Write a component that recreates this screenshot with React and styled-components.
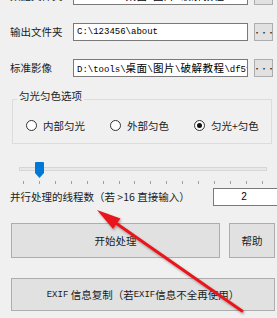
import React from "react";
import styled, { createGlobalStyle } from "styled-components";

const GlobalStyle = createGlobalStyle`
    html, body {
        margin: 0;
        padding: 0;
        background: #f0f0f0;
        overflow: hidden;
    }
`;

const UI_FONT = `"Noto Sans CJK SC", "Noto Sans", sans-serif`;
const MONO_FONT = `"Liberation Mono", "Noto Sans CJK SC", monospace`;

const paths = [
    { label: "数据文件夹", value: "D:\\tools\\桌面\\图片\\破解教程" },
    { label: "输出文件夹", value: "C:\\123456\\about" },
    { label: "标准影像", value: "D:\\tools\\桌面\\图片\\破解教程\\df5f" },
];

const modes = [
    { text: "内部匀光", checked: false },
    { text: "外部匀色", checked: false },
    { text: "匀光+匀色", checked: true },
];

const TICKS = 16;

// 한자 부분만 더 크게 (SimSun 처럼 반각/전각 폭 맞추기)
const PathText = ({ value }) =>
    value.split(/([\u4e00-\u9fff]+)/).map((part, i) =>
        i % 2 ? <Wide key={i}>{part}</Wide> : <span key={i}>{part}</span>
    );

const App = () => {
    return (
        <>
            <GlobalStyle />
            <Window>
                <Content>
                    {paths.map((p) => (
                        <PathRow key={p.label}>
                            <Label>{p.label}</Label>
                            <TextBox>
                                <PathText value={p.value} />
                            </TextBox>
                            <SmallButton>···</SmallButton>
                        </PathRow>
                    ))}

                    <Group>
                        <Legend>匀光匀色选项</Legend>
                        <RadioRow>
                            {modes.map((m) => (
                                <Radio key={m.text}>
                                    <RadioCircle $checked={m.checked} />
                                    <span>{m.text}</span>
                                </Radio>
                            ))}
                        </RadioRow>
                    </Group>

                    <Slider>
                        <Track />
                        <Thumb style={{ left: 4 + 1 * 16 - 4.5 }}>
                            <svg width="9" height="16" viewBox="0 0 9 16">
                                <path d="M1 0 H8 Q9 0 9 1 V11 L4.5 16 L0 11 V1 Q0 0 1 0 Z" fill="#0078d7" />
                            </svg>
                        </Thumb>
                        <Ticks>
                            {Array.from({ length: TICKS }).map((_, i) => (
                                <Tick key={i} />
                            ))}
                        </Ticks>
                    </Slider>

                    <ThreadRow>
                        <Label>并行处理的线程数（若 &gt;16 直接输入）</Label>
                        <NumberBox>2</NumberBox>
                    </ThreadRow>

                    <ButtonRow>
                        <Button>开始处理</Button>
                        <Button>帮助</Button>
                    </ButtonRow>

                    <WideButton>
                        <Mono>EXIF</Mono>&nbsp;信息复制（若<Mono>EXIF</Mono>信息不全再使用）
                    </WideButton>
                </Content>

                <Arrow width="277" height="318" viewBox="0 0 277 318">
                    <defs>
                        <filter id="shadow" x="-20%" y="-20%" width="140%" height="140%">
                            <feDropShadow dx="1" dy="1.5" stdDeviation="1" floodColor="#000" floodOpacity="0.35" />
                        </filter>
                    </defs>
                    <g filter="url(#shadow)">
                        <line x1="242" y1="311" x2="115" y2="222.5" stroke="#e8191b" strokeWidth="3" strokeLinecap="round" />
                        <polygon points="97,210 120.5,218.5 113,229" fill="#e8191b" />
                    </g>
                </Arrow>
            </Window>
        </>
    );
};

export default App;

const Window = styled.div`
    position: relative;
    width: 277px;
    height: 318px;
    overflow: hidden;
    background: #f0f0f0;
    font-family: ${UI_FONT};
    font-size: 10.5px;
    color: #1a1a1a;
`;

const Content = styled.div`
    display: flex;
    flex-direction: column;
    padding-left: 10px;
    margin-top: -22px;
`;

const PathRow = styled.div`
    display: grid;
    grid-template-columns: 57px 175px 19px;
    column-gap: 6px;
    align-items: center;
    height: 36px;
`;

const Label = styled.div`
    white-space: nowrap;
    line-height: 14px;
`;

const TextBox = styled.div`
    box-sizing: border-box;
    min-width: 0;
    height: 18px;
    padding: 0 3px;
    border: 1px solid #7a7a7a;
    background: #fff;
    font-family: ${MONO_FONT};
    font-size: 9px;
    line-height: 16px;
    white-space: nowrap;
    overflow: hidden;
    color: #000;
`;

const Wide = styled.span`
    font-family: ${UI_FONT};
    font-size: 10.5px;
    letter-spacing: 0.5px;
`;

const SmallButton = styled.div`
    box-sizing: border-box;
    height: 18px;
    border: 1px solid #adadad;
    background: #e1e1e1;
    display: flex;
    align-items: center;
    justify-content: center;
    font-size: 8px;
    letter-spacing: -1px;
    color: #222;
`;

const Group = styled.fieldset`
    box-sizing: border-box;
    width: 260px;
    margin: 3px 0 0 2px;
    padding: 0 0 2px 4px;
    border: 1px solid #dcdcdc;
    min-width: 0;
`;

const Legend = styled.legend`
    padding: 0 2px 6px;
    line-height: 14px;
`;

const RadioRow = styled.div`
    display: grid;
    grid-template-columns: 84px 84px auto;
    align-items: center;
    height: 32px;
    padding-left: 9px;
`;

const Radio = styled.div`
    display: flex;
    align-items: center;
    gap: 6px;
    white-space: nowrap;
`;

const RadioCircle = styled.span`
    box-sizing: border-box;
    width: 11px;
    height: 11px;
    border-radius: 50%;
    border: 1px solid #333;
    background: #fff;
    display: flex;
    align-items: center;
    justify-content: center;

    &::after {
        content: "";
        display: ${(p) => (p.$checked ? "block" : "none")};
        width: 5px;
        height: 5px;
        border-radius: 50%;
        background: #111;
    }
`;

const Slider = styled.div`
    position: relative;
    width: 248px;
    height: 28px;
    margin: 15px 0 0 9px;
`;

const Track = styled.div`
    box-sizing: border-box;
    margin-top: 8px;
    height: 4px;
    border: 1px solid #d6d6d6;
    background: #e7eaea;
`;

const Thumb = styled.div`
    position: absolute;
    top: 3px;
    line-height: 0;
`;

const Ticks = styled.div`
    display: flex;
    justify-content: space-between;
    padding: 0 4px;
    margin-top: 10px;
`;

const Tick = styled.span`
    width: 1px;
    height: 3px;
    background: #a0a0a0;
`;

const ThreadRow = styled.div`
    display: grid;
    grid-template-columns: 203px 66px;
    align-items: center;
    height: 20px;
`;

const NumberBox = styled(TextBox)`
    font-family: "Liberation Sans", sans-serif;
    font-size: 10px;
    text-align: center;
    padding: 0 4px 0 0;
`;

const ButtonRow = styled.div`
    display: grid;
    grid-template-columns: 209px 46px;
    column-gap: 9px;
    margin: 16px 0 0 1px;
`;

const Button = styled.div`
    box-sizing: border-box;
    height: 35px;
    border: 1px solid #adadad;
    background: #e1e1e1;
    display: flex;
    align-items: center;
    justify-content: center;
`;

const WideButton = styled(Button)`
    width: 264px;
    height: 33px;
    margin: 20px 0 0 1px;
    white-space: nowrap;
`;

const Mono = styled.span`
    font-family: "Liberation Mono", monospace;
    font-size: 9px;
`;

const Arrow = styled.svg`
    position: absolute;
    left: 0;
    top: 0;
    pointer-events: none;
`;
